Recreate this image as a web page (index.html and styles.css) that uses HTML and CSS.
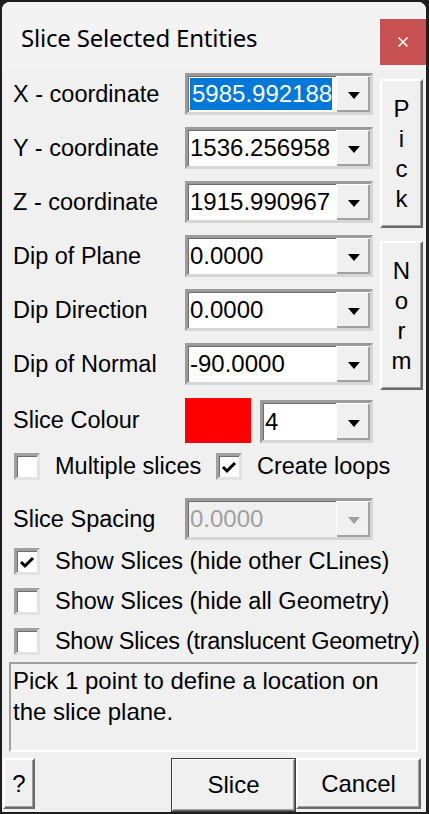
FILE: index.html
```html
<!DOCTYPE html>
<html lang="en">
<head>
  <meta charset="UTF-8">
  <title>Slice Selected Entities</title>
  <link rel="stylesheet" href="styles.css">
</head>
<body>
  <div class="window">
    <div class="titlebar">
      <span class="title">Slice Selected Entities</span>
      <div class="close">
        <svg width="14" height="14" viewBox="0 0 14 14"><path d="M2.5 2.5 L11.5 11.5 M11.5 2.5 L2.5 11.5" stroke="#fff" stroke-width="1.6" fill="none"/></svg>
      </div>
    </div>

    <div class="content">
      <!-- coordinates + plane fields -->
      <div class="fields">
        <span class="lbl">X - coordinate</span>
        <div class="combo"><span class="value"><span class="sel">5985.992188</span></span><span class="drop"><i class="arrow"></i></span></div>
        <div class="side"><span>P</span><span>i</span><span>c</span><span>k</span></div>

        <span class="lbl">Y - coordinate</span>
        <div class="combo"><span class="value">1536.256958</span><span class="drop"><i class="arrow"></i></span></div>

        <span class="lbl">Z - coordinate</span>
        <div class="combo"><span class="value">1915.990967</span><span class="drop"><i class="arrow"></i></span></div>

        <span class="lbl">Dip of Plane</span>
        <div class="combo"><span class="value">0.0000</span><span class="drop"><i class="arrow"></i></span></div>
        <div class="side side-norm"><span>N</span><span>o</span><span>r</span><span>m</span></div>

        <span class="lbl">Dip Direction</span>
        <div class="combo"><span class="value">0.0000</span><span class="drop"><i class="arrow"></i></span></div>

        <span class="lbl">Dip of Normal</span>
        <div class="combo"><span class="value">-90.0000</span><span class="drop"><i class="arrow"></i></span></div>

        <span class="lbl">Slice Colour</span>
        <div class="colour-row">
          <div class="swatch"></div>
          <div class="combo combo-small"><span class="value">4</span><span class="drop"><i class="arrow"></i></span></div>
        </div>
      </div>

      <div class="check-row">
        <label class="check check-first"><span class="box"></span>Multiple slices</label>
        <label class="check"><span class="box checked"><svg width="16" height="14" viewBox="0 0 16 14"><polyline points="2,7 6,11 14,3" fill="none" stroke="#000" stroke-width="3"/></svg></span>Create loops</label>
      </div>

      <div class="spacing-row">
        <span class="lbl">Slice Spacing</span>
        <div class="combo disabled"><span class="value">0.0000</span><span class="drop"><i class="arrow"></i></span></div>
      </div>

      <div class="show-list">
        <label class="check"><span class="box checked"><svg width="16" height="14" viewBox="0 0 16 14"><polyline points="2,7 6,11 14,3" fill="none" stroke="#000" stroke-width="3"/></svg></span>Show Slices (hide other CLines)</label>
        <label class="check"><span class="box"></span>Show Slices (hide all Geometry)</label>
        <label class="check"><span class="box"></span><span class="long">Show Slices (translucent Geometry)</span></label>
      </div>

      <div class="message">Pick 1 point to define a location on the slice plane.</div>

      <div class="buttons">
        <div class="btn btn-help">?</div>
        <div class="btn btn-default">Slice</div>
        <div class="btn btn-cancel">Cancel</div>
      </div>
    </div>
  </div>
</body>
</html>
```

FILE: styles.css
```css
/* desktop behind the dialog */
body {
  margin: 0;
  background: #1e1e1e;
  font-family: "Liberation Sans", Arial, sans-serif;
  color: #000;
}
.window {
  margin: 2px 3px 0 2px;
  width: 424px;
  height: 810px;
  background: #f0f0f0;
  border-radius: 8px 8px 0 0;
  overflow: hidden;
}
/* title bar */
.titlebar {
  height: 68px;
  background: #f3f3f3;
  display: flex;
  justify-content: space-between;
  align-items: flex-start;
}
.title {
  font-family: "Noto Sans", "Open Sans", sans-serif;
  font-size: 24px;
  margin: 19px 0 0 19px;
  letter-spacing: -0.2px;
}
.close {
  margin-top: 17px;
  width: 46px;
  height: 46px;
  background: #c75050;
  display: flex;
  align-items: center;
  justify-content: center;
}
.content {
  font-size: 23.5px;
  padding-top: 3px;
}
/* field grid */
.fields {
  display: grid;
  grid-template-columns: 172px 188px 50px;
  grid-template-rows: repeat(6, 42px) 46px;
  row-gap: 12px;
  padding-left: 11px;
}
.lbl {
  display: flex;
  align-items: center;
  white-space: nowrap;
}
.combo {
  display: flex;
  height: 42px;
  box-sizing: border-box;
  background: #fff;
  border: 3px solid;
  border-color: #9b9b9b #d6d6d6 #d6d6d6 #9b9b9b;
  box-shadow: inset 1px 1px 0 #6e6e6e;
}
.value {
  flex: 1;
  display: flex;
  align-items: center;
  overflow: hidden;
  white-space: nowrap;
  padding-left: 2px;
  min-width: 0;
  font-size: 24px;
}
.sel {
  background: #0078d7;
  color: #fff;
  padding: 3px 0 3px 2px;
  line-height: 26px;
}
.drop {
  width: 33px;
  flex: none;
  background: #f0f0f0;
  border-left: 1px solid #fff;
  border-top: 1px solid #fff;
  box-shadow: inset -2px -2px 0 #a0a0a0;
  display: flex;
  align-items: center;
  justify-content: center;
}
.arrow {
  width: 0;
  height: 0;
  border-left: 6px solid transparent;
  border-right: 6px solid transparent;
  border-top: 7px solid #000;
  margin-top: 2px;
}
.disabled {
  background: #f0f0f0;
  color: #a0a0a0;
}
.disabled .arrow {
  border-top-color: #a0a0a0;
}
/* Pick / Norm buttons with stacked letters */
.side {
  grid-column: 3;
  grid-row: 1 / span 3;
  align-self: start;
  margin: 6px 0 0 7px;
  width: 43px;
  height: 149px;
  box-sizing: border-box;
  background: #f0f0f0;
  border: 2px solid;
  border-color: #fff #6a6a6a #6a6a6a #fff;
  box-shadow: inset -1px -1px 0 #a0a0a0;
  display: flex;
  flex-direction: column;
  align-items: center;
  justify-content: center;
  line-height: 30px;
  font-size: 24px;
}
.side-norm {
  grid-row: 4 / span 3;
}
.colour-row {
  display: flex;
  gap: 9px;
  align-items: flex-end;
}
.swatch {
  width: 66px;
  height: 45px;
  background: #ff0000;
}
.combo-small {
  width: 113px;
  height: 43px;
}
/* checkboxes */
.check-row {
  display: flex;
  margin: 10px 0 0 12px;
  height: 27px;
}
.check {
  display: flex;
  align-items: center;
  gap: 15px;
  white-space: nowrap;
  height: 27px;
}
.check-first {
  width: 202px;
}
.box {
  width: 26px;
  height: 27px;
  box-sizing: border-box;
  background: #fff;
  border: 3px solid;
  border-color: #a0a0a0 #e3e3e3 #e3e3e3 #a0a0a0;
  box-shadow: inset 1px 1px 0 #6e6e6e;
  display: flex;
  align-items: center;
  justify-content: center;
  flex: none;
}
.long {
  letter-spacing: -0.3px;
}
.spacing-row {
  display: grid;
  grid-template-columns: 172px 188px;
  margin: 18px 0 0 11px;
}
.show-list {
  display: flex;
  flex-direction: column;
  gap: 13px;
  margin: 8px 0 0 12px;
  overflow: hidden;
}
/* status message */
.message {
  margin: 7px 0 0 7px;
  width: 409px;
  height: 90px;
  box-sizing: border-box;
  border: 2px solid;
  border-color: #a0a0a0 #fff #fff #a0a0a0;
  padding: 1px 6px 0 2px;
  line-height: 31px;
  font-size: 24px;
}
/* bottom buttons */
.buttons {
  display: flex;
  margin: 6px 5px 0 1px;
  height: 54px;
  font-size: 24px;
}
.btn {
  box-sizing: border-box;
  background: #f0f0f0;
  border: 2px solid;
  border-color: #fff #6a6a6a #6a6a6a #fff;
  box-shadow: inset -1px -1px 0 #a0a0a0;
  display: flex;
  align-items: center;
  justify-content: center;
}
.btn-help {
  width: 32px;
  height: 51px;
}
.btn-default {
  margin-left: auto;
  width: 125px;
  height: 54px;
  outline: 1px solid #3c3c3c;
  outline-offset: -1px;
}
.btn-cancel {
  width: 125px;
  height: 51px;
}
```
